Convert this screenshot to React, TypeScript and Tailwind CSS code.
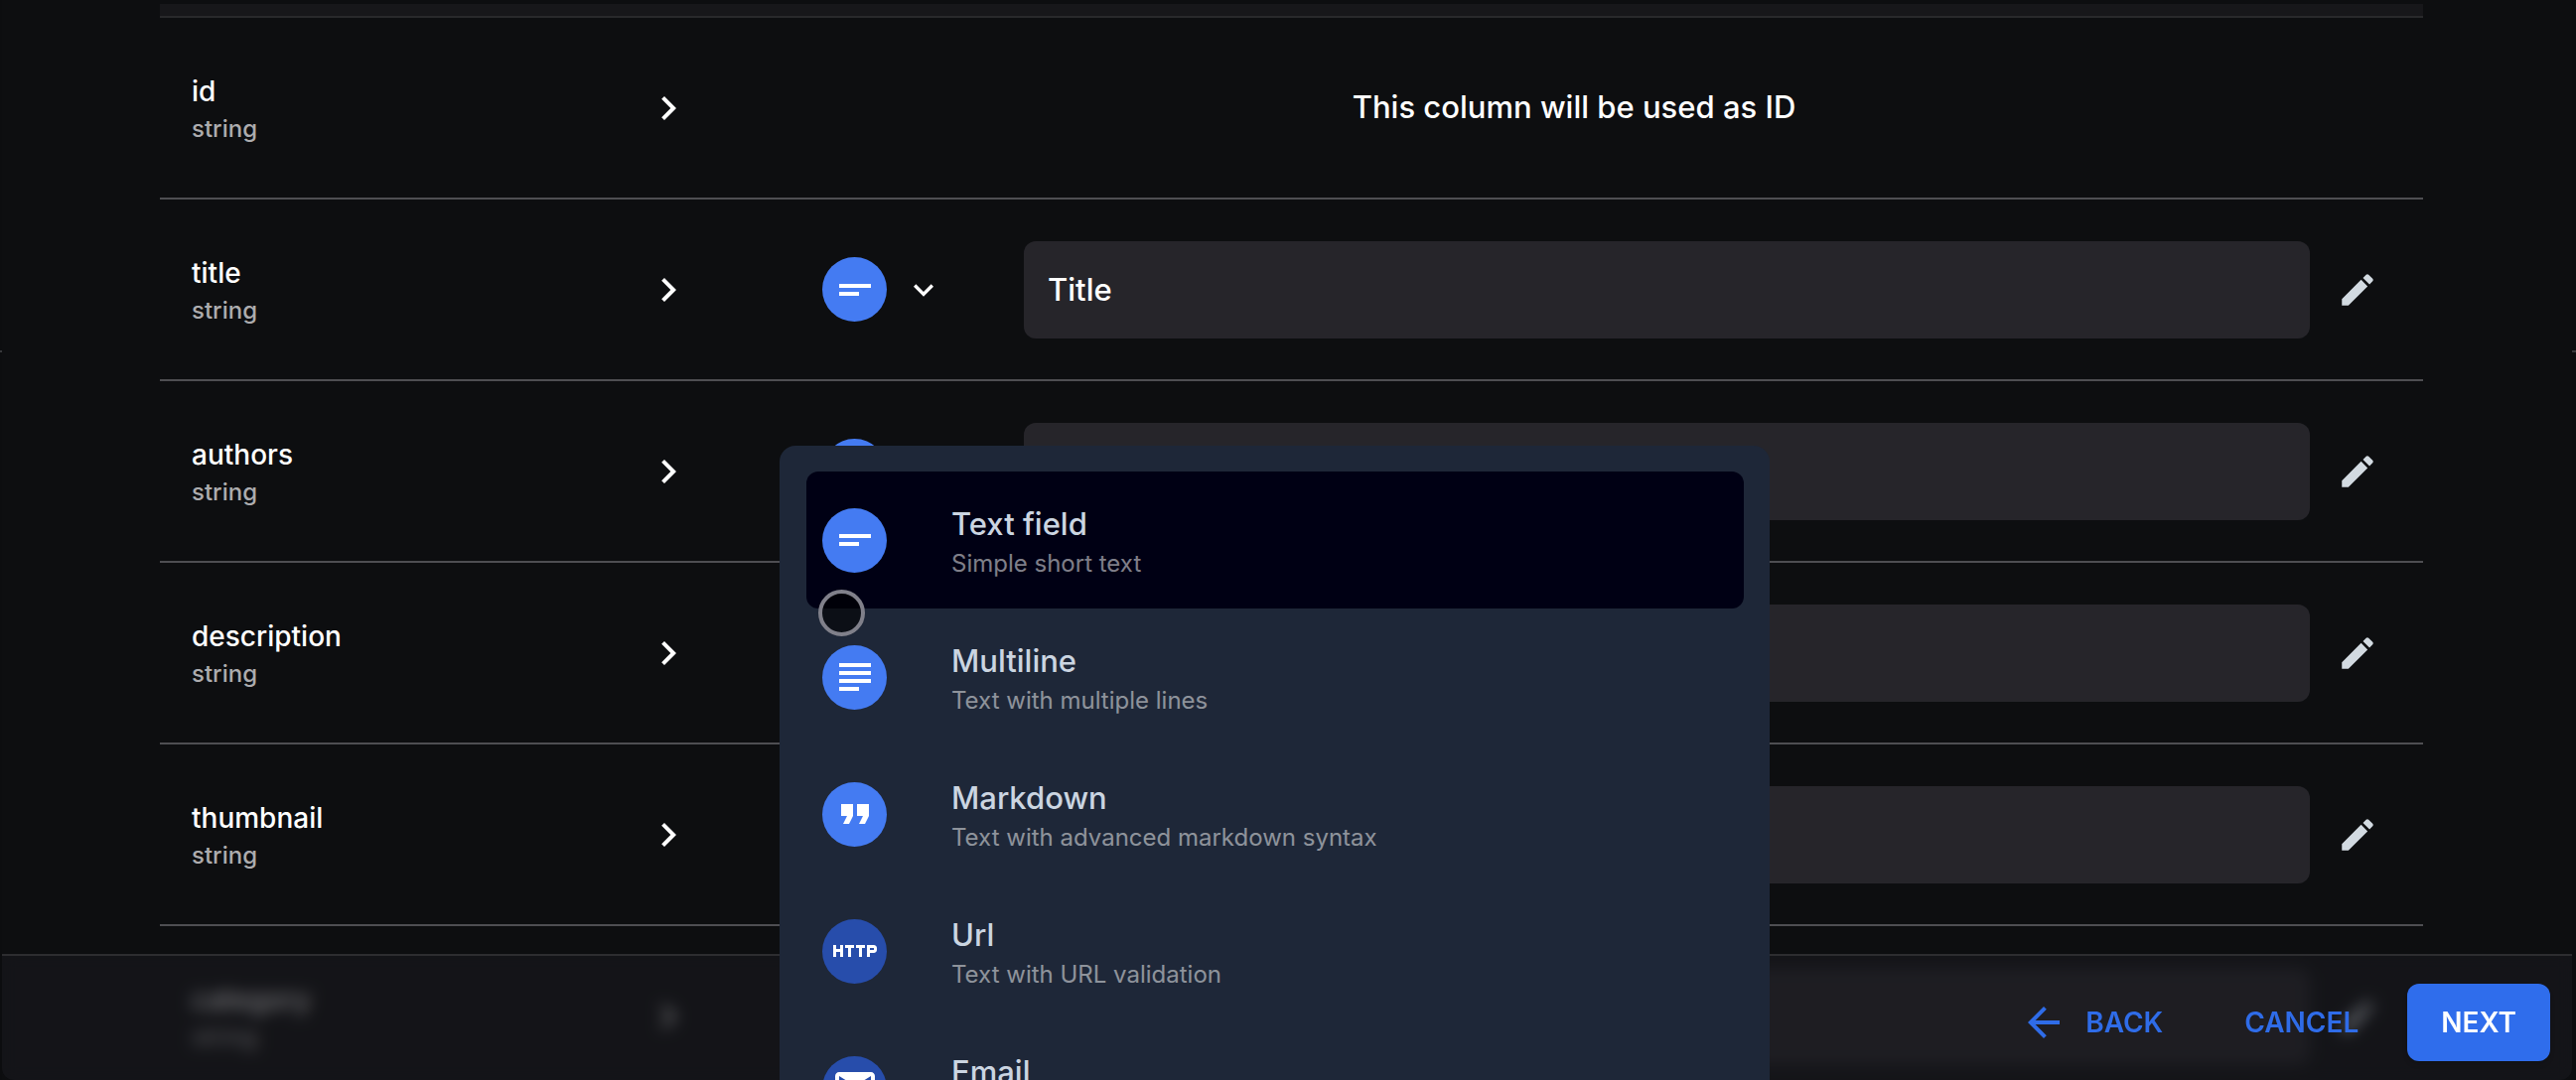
import type { ReactNode } from "react";
import {
  MdArrowBack,
  MdChevronRight,
  MdEdit,
  MdEmail,
  MdExpandMore,
  MdFormatQuote,
  MdHttp,
  MdShortText,
  MdSubject,
} from "react-icons/md";

type Column = { name: string; label?: string };

const columns: Column[] = [
  { name: "id" },
  { name: "title", label: "Title" },
  { name: "authors", label: "Authors" },
  { name: "description", label: "Description" },
  { name: "thumbnail", label: "Thumbnail" },
  { name: "category", label: "Category" },
];

type FieldType = { title: string; hint: string; icon: ReactNode; tone: string };

const fieldTypes: FieldType[] = [
  { title: "Text field", hint: "Simple short text", icon: <MdShortText size={48} />, tone: "bg-[#447bf2]" },
  { title: "Multiline", hint: "Text with multiple lines", icon: <MdSubject size={48} />, tone: "bg-[#447bf2]" },
  { title: "Markdown", hint: "Text with advanced markdown syntax", icon: <MdFormatQuote size={48} />, tone: "bg-[#447bf2]" },
  { title: "Url", hint: "Text with URL validation", icon: <MdHttp size={48} />, tone: "bg-[#274dab]" },
  { title: "Email", hint: "Text with email validation", icon: <MdEmail size={48} />, tone: "bg-[#274dab]" },
];

function Badge({ tone, children }: { tone: string; children: ReactNode }) {
  return (
    <span className={`flex size-[65px] shrink-0 items-center justify-center rounded-full text-white ${tone}`}>
      {children}
    </span>
  );
}

function TypeMenu() {
  return (
    <ul
      role="listbox"
      aria-label="Field type"
      className="absolute top-[190px] -left-[43px] z-20 w-[997px] rounded-2xl bg-[#1e2738] pt-[26px] pr-[26px] pb-[26px] pl-[27px]"
    >
      {fieldTypes.map((type, index) => (
        <li
          key={type.title}
          role="option"
          aria-selected={index === 0}
          className={`flex h-[138px] items-center gap-[65px] rounded-xl px-4 ${index === 0 ? "bg-[#000014]" : ""}`}
        >
          <Badge tone={type.tone}>{type.icon}</Badge>
          <div className="pt-1">
            <p className="text-[31px] leading-10 font-medium text-[#cbd5e1]">{type.title}</p>
            <p className="mt-1 text-2xl leading-8 text-white/50">{type.hint}</p>
          </div>
        </li>
      ))}
    </ul>
  );
}

function TypeSelect({ name, open }: { name: string; open: boolean }) {
  return (
    <div className="relative">
      <button
        type="button"
        aria-haspopup="listbox"
        aria-expanded={open}
        aria-label={`Field type of ${name}`}
        className="flex items-center gap-[17px] text-white"
      >
        <Badge tone="bg-[#447bf2]">
          <MdShortText size={48} />
        </Badge>
        <MdExpandMore size={40} />
      </button>
      {open && <TypeMenu />}
    </div>
  );
}

const cell = "border-b-2 border-[#4e4e52] p-0";

function Row({ column }: { column: Column }) {
  return (
    <tr className="h-[183px]">
      <th scope="row" className={`${cell} pt-0.5 pl-8 text-left`}>
        <p className="text-[28px] leading-9 font-medium text-white">{column.name}</p>
        <p className="mt-1 text-2xl leading-8 font-medium text-[#acacae]">string</p>
      </th>
      <td className={`${cell} text-white`}>
        <MdChevronRight size={48} />
      </td>
      {column.label ? (
        <>
          <td className={`${cell} pl-[98px]`}>
            <TypeSelect name={column.name} open={column.name === "title"} />
          </td>
          <td className={cell}>
            <input
              type="text"
              aria-label={`Label of ${column.name}`}
              defaultValue={column.label}
              className="block h-[98px] w-full rounded-xl bg-[#26252a] px-6 text-[31px] font-medium text-white outline-none"
            />
          </td>
          <td className={`${cell} pl-[27px]`}>
            <button type="button" aria-label={`Edit ${column.name}`} className="block text-[#d2dae1]">
              <MdEdit size={42} />
            </button>
          </td>
        </>
      ) : (
        <td colSpan={3} className={`${cell} text-center text-[31px] font-medium text-white`}>
          This column will be used as ID
        </td>
      )}
    </tr>
  );
}

function Footer() {
  return (
    <footer className="absolute inset-x-0 bottom-0 z-10 flex h-[127px] items-start justify-end gap-4 rounded-b-xl border-t-2 border-[#2d2d30] bg-[#19191e]/60 pt-7 pr-[22px] text-[28px] font-semibold backdrop-blur-[8px]">
      <button type="button" className="flex h-[78px] items-center gap-[18px] px-[33px] text-[#2f6ce8]">
        <MdArrowBack size={48} />
        BACK
      </button>
      <button type="button" className="h-[78px] px-[33px] text-[#2f6ce8]">
        CANCEL
      </button>
      <button type="button" className="h-[78px] rounded-xl bg-[#2f6dec] px-[34px] text-white shadow-md">
        NEXT
      </button>
    </footer>
  );
}

export default function App() {
  return (
    <div className="relative h-screen overflow-hidden bg-[#0c0d0f] pr-1 pl-0.5 font-['Inter',sans-serif]">
      <hr className="absolute inset-x-0 top-[353px] border-t-2 border-[#38393c]" />
      <main className="relative h-full overflow-hidden bg-[#0d0e10] pt-1 pr-[150px] pl-[159px]">
        <table className="w-full table-fixed border-separate border-spacing-0">
          <colgroup>
            <col className="w-[488px]" />
            <col className="w-[81px]" />
            <col className="w-[301px]" />
            <col />
            <col className="w-[114px]" />
          </colgroup>
          <thead>
            <tr className="h-[14px]">
              <td colSpan={5} className="border-b-2 border-[#29292b] bg-[#17171a] p-0" />
            </tr>
          </thead>
          <tbody>
            {columns.map((column) => (
              <Row key={column.name} column={column} />
            ))}
          </tbody>
        </table>
        <Footer />
        {/* Pointer ring */}
        <span className="pointer-events-none absolute top-[594px] left-[822px] z-30 size-[47px] rounded-full border-4 border-[#80808a] bg-black/60" />
      </main>
    </div>
  );
}
